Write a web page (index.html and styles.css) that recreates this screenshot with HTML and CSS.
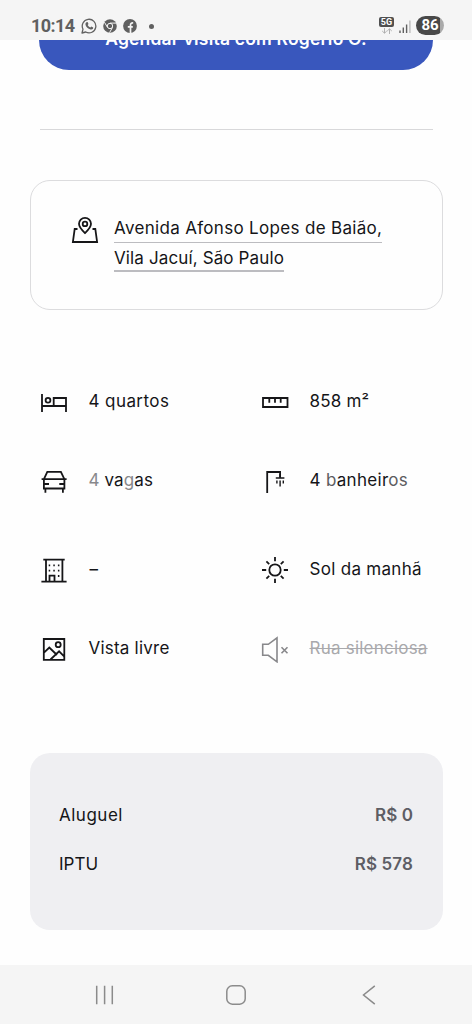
FILE: index.html
```html
<!DOCTYPE html>
<html lang="pt-BR">
<head>
<meta charset="utf-8">
<title>Imóvel</title>
<link rel="stylesheet" href="styles.css">
</head>
<body>
<div class="phone">
  <header class="status">
    <span class="clock">10:14</span>
    <svg class="st-icon" viewBox="0 0 16 16" width="16" height="16"><path d="M1 15l1-3.8A6.8 6.8 0 1 1 4.7 14Z" fill="none" stroke="#626262" stroke-width="1.3" stroke-linejoin="round"/><path d="M5.4 4.2 6.6 4l.9 2-.8 1c.6 1.2 1.400 1.900 2.600 2.500l1-.9 1.900 1-.2 1.100c-.7.9-1.900 1-3.100.5-2.200-.8-3.900-2.600-4.400-4.500-.2-1 .2-2 .9-2.500Z" fill="#626262"/></svg>
    <svg class="st-icon chrome" viewBox="0 0 14 14" width="14" height="14"><circle cx="7" cy="7" r="6.800" fill="#606060"/><circle cx="7" cy="7" r="2.700" fill="#606060" stroke="#f5f5f5" stroke-width="1"/><path d="M7 4.100h6.200M4.500 8.400 1.400 3.200M9.500 8.400 6.500 13.700" stroke="#f5f5f5" stroke-width="1"/></svg>
    <svg class="st-icon facebook" viewBox="0 0 14 14" width="14" height="14"><circle cx="7" cy="7" r="6.900" fill="#606060"/><path d="M7.500 14V6.200c0-1.800.8-2.400 2.700-2.200M4.800 7.900h5" fill="none" stroke="#f5f5f5" stroke-width="1.700"/></svg>
    <span class="dot"></span>
    <span class="network"><span class="five-g">5G</span>
      <svg viewBox="0 0 12 6" width="12" height="6"><path d="M3.500 0v5M1.200 3l2.300 2.200L5.800 3M8.500 6V1M6.200 3l2.300-2.200L10.800 3" fill="none" stroke="#aaa" stroke-width=".9"/></svg>
    </span>
    <svg class="signal" viewBox="0 0 12 13" width="12" height="13"><path d="M1 10.500V13M4.300 7.500V13M7.600 4.500V13" stroke="#606060" stroke-width="1.400"/><path d="M10.900.5V13" stroke="#bbb" stroke-width="1.400"/></svg>
    <span class="battery">86</span>
  </header>

  <main class="content">
    <div class="visit"><span class="visit-text">Agendar visita com Rogerio O.</span></div>
    <div class="divider"></div>

    <section class="address">
      <svg class="icon" viewBox="0 0 28 28"><path d="M6.500 13H3.700L1.900 26h24.200L24.300 13h-2.800M14 17.100C10.200 13.500 8 11 8 7.800a6 6 0 0 1 12 0c0 3.200-2.200 5.700-6 9.300Z"/><circle cx="14" cy="7.900" r="2.300"/></svg>
      <div class="address-lines">
        <span class="line line-one">Avenida Afonso Lopes de Baião,</span>
        <span class="line line-two">Vila Jacuí, São Paulo</span>
      </div>
    </section>

    <section class="features">
      <div class="feature"><svg class="icon" viewBox="0 0 28 28"><path d="M2 6v18M2 18h24M26 24V10H13.700v8"/><circle cx="8" cy="12.300" r="2.400"/></svg><span class="t-quartos">4 quartos</span></div>
      <div class="feature"><svg class="icon" viewBox="0 0 28 28"><path d="M2 10h24.500v9H2zM8.300 10v4.800M14 10v4.800M19.700 10v4.800"/></svg><span class="t-area">858 m²</span></div>
      <div class="feature"><svg class="icon" viewBox="0 0 28 28"><path d="M1.600 12.200h25M3.900 21.500v-9.300L7.300 4.800h13.600l3.500 7.400v9.300zM5.400 21.500v4.200M22.900 21.500v4.200M4 17h5M19.300 17h5"/></svg><span class="t-vagas"><span class="fade">4</span> va<span class="fade">g</span>as</span></div>
      <div class="feature"><svg class="icon" viewBox="0 0 28 28"><path d="M6.200 26V5h12.900v5.500"/><path class="thin" d="M14.800 11h8.600M19.100 7v4M15.900 13.500v3M19.100 13.500v6M22.300 13.500v3"/></svg><span class="t-banheiros">4 <span class="half">b</span>anheir<span class="half">os</span></span></div>
      <div class="feature"><svg class="icon" viewBox="0 0 28 28"><path d="M3.300 3.700h21.400M6 4v21.700M22.400 4v21.700M1.400 25.700h25.200M9.500 25.700v-6h5v6"/><path d="M8.700 9.400h1.500M13.300 9.400h1.500M17.900 9.400h1.500M8.700 14.700h1.500M13.300 14.700h1.500M17.900 14.700h1.500M17.900 20h1.500"/></svg><span class="t-dash">–</span></div>
      <div class="feature"><svg class="icon" viewBox="0 0 28 28"><circle cx="14" cy="14" r="5.700"/><path d="M14 1v4.200M14 22.800V27M1 14h4.200M22.800 14H27M5.400 5.400l2.800 2.800M19.800 19.800l2.800 2.800M5.400 22.600l2.800-2.800M19.800 8.200l2.800-2.800"/></svg><span class="t-sol">Sol da manhã</span></div>
      <div class="feature"><svg class="icon" viewBox="0 0 28 28"><path d="M3.800 4h20.500v20.800H3.800zM4 17.700l5.300-5.200 7.700 7.500M10.500 24.500l8.600-8.200 5 5"/><circle cx="18.200" cy="9.700" r="2.500"/></svg><span class="t-vista">Vista livre</span></div>
      <div class="feature muted"><svg class="icon" viewBox="0 0 28 28"><path d="M1.700 9.300h5.600L16 2.800v24l-8.700-6.500H1.700zM20.500 12.300l6 6M26.500 12.300l-6 6"/></svg><span class="t-rua">Rua silenciosa</span></div>
    </section>

    <section class="costs">
      <div class="cost"><span class="t-aluguel">Aluguel</span><span class="value">R$ 0</span></div>
      <div class="cost"><span class="t-iptu">IPTU</span><span class="value">R$ 578</span></div>
    </section>
  </main>

  <nav class="nav">
    <svg viewBox="0 0 20 20" width="20" height="20"><path d="M1.700.8v18.400M9.600.8v18.400M17.300.8v18.400"/></svg>
    <svg viewBox="0 0 20 20" width="20" height="20"><rect x=".8" y=".8" width="18.400" height="18.400" rx="5.500"/></svg>
    <svg viewBox="0 0 20 20" width="20" height="20"><path d="M15.800.8 4.500 10l11.300 9.200"/></svg>
  </nav>
</div>
</body>
</html>
```
FILE: styles.css
```css
* { box-sizing: border-box; }
body { margin: 0; background: #fefefe; color: #151518; font-family: "Inter", "Liberation Sans", sans-serif; font-size: 17px; }
.phone { width: 472px; height: 1024px; display: flex; flex-direction: column; overflow: hidden; }
svg { display: block; flex: none; }

.status { height: 40px; flex: none; background: #f5f5f5; display: flex; align-items: center; padding: 12px 28px 0 31px; font-family: Roboto, sans-serif; }
.clock { width: 50px; font-size: 18px; font-weight: 700; color: #606060; letter-spacing: -.6px; white-space: nowrap; margin-top: -2px; }
.chrome { margin-left: 6px; }
.facebook { margin-left: 6px; }
.dot { width: 5px; height: 5px; margin-left: 12px; border-radius: 50%; background: #606060; }
.network { width: 15px; margin-left: auto; display: flex; flex-direction: column; align-items: center; gap: 1px; margin-top: -2px; }
.five-g { width: 15px; height: 10px; border-radius: 2px; background: #505050; color: #fff; font-size: 9px; line-height: 10px; font-weight: 700; text-align: center; }
.signal { margin: 0 5px 0 5px; }
.battery { width: 28px; height: 19px; margin-top: -1px; border-radius: 10px; background: linear-gradient(90deg, #484848 86%, #aaa 86%); color: #fff; font-size: 15px; line-height: 19px; font-weight: 700; text-align: center; }

.content { flex: 1; min-height: 0; overflow: hidden; padding: 0 29.5px 0 30px; }
.visit { height: 60px; margin: -30px 9.500px 0 9px; padding-top: 18px; border-radius: 30px; background: #3957bd; display: flex; justify-content: center; align-items: flex-start; color: #fff; font-weight: 600; font-size: 17.500px; line-height: 21px; letter-spacing: .2px; }
.visit-text { white-space: nowrap; }
.divider { height: 1px; margin: 59px 10px 0; background: #d8d8da; }
.address { height: 130px; margin-top: 50px; padding: 35px 39px 0 40px; border: 1px solid #dcdcde; border-radius: 20px; display: flex; gap: 15px; }
.icon { width: 28px; height: 28px; fill: none; stroke: #161618; stroke-width: 1.8; }
.thin { stroke-width: 1.400; }
.address-lines { display: flex; flex-direction: column; align-items: flex-start; }
.line { height: 27px; line-height: 25px; border-bottom: 1px solid #bcbcc0; white-space: nowrap; }
.line-one { letter-spacing: .32px; }
.line-two { margin-top: 2px; line-height: 27px; border-bottom-width: 2px; letter-spacing: .13px; }

.features { margin: 78px 0 0 10px; display: grid; grid-template-columns: 221px 1fr; grid-template-rows: 79px 89px 79px 28px; }
.feature { height: 28px; display: flex; gap: 20.500px; align-items: flex-start; line-height: 26px; white-space: nowrap; }
.t-quartos { letter-spacing: .42px; }
.t-area { letter-spacing: .2px; }
.t-vagas { letter-spacing: .1px; }
.t-banheiros, .t-sol { letter-spacing: .3px; }
.t-vista { letter-spacing: .22px; }
.t-rua { letter-spacing: .22px; }
.t-dash { padding-left: 1px; }
.t-aluguel { letter-spacing: .5px; }
.fade { color: #88888b; }
.half { color: #5c5c60; }
.muted { color: #a9a9ac; }
.muted span { text-decoration: line-through; }
.muted .icon { stroke: #88888b; stroke-width: 1.6; }

.costs { height: 177px; margin-top: 90px; padding: 50px 29.5px 0 29px; border-radius: 20px; background: #efeff2; display: flex; flex-direction: column; gap: 25px; }
.cost { height: 24px; line-height: 24px; display: flex; justify-content: space-between; }
.value { color: #5d5d64; font-weight: 600; letter-spacing: .1px; }

.nav { height: 59px; flex: none; background: #f5f5f5; display: flex; justify-content: space-between; align-items: center; padding: 0 93px 0 95px; }
.nav svg { fill: none; stroke: #8b8b8b; stroke-width: 1.500; }
.nav svg:nth-child(2) { margin-right: 2px; }
```
